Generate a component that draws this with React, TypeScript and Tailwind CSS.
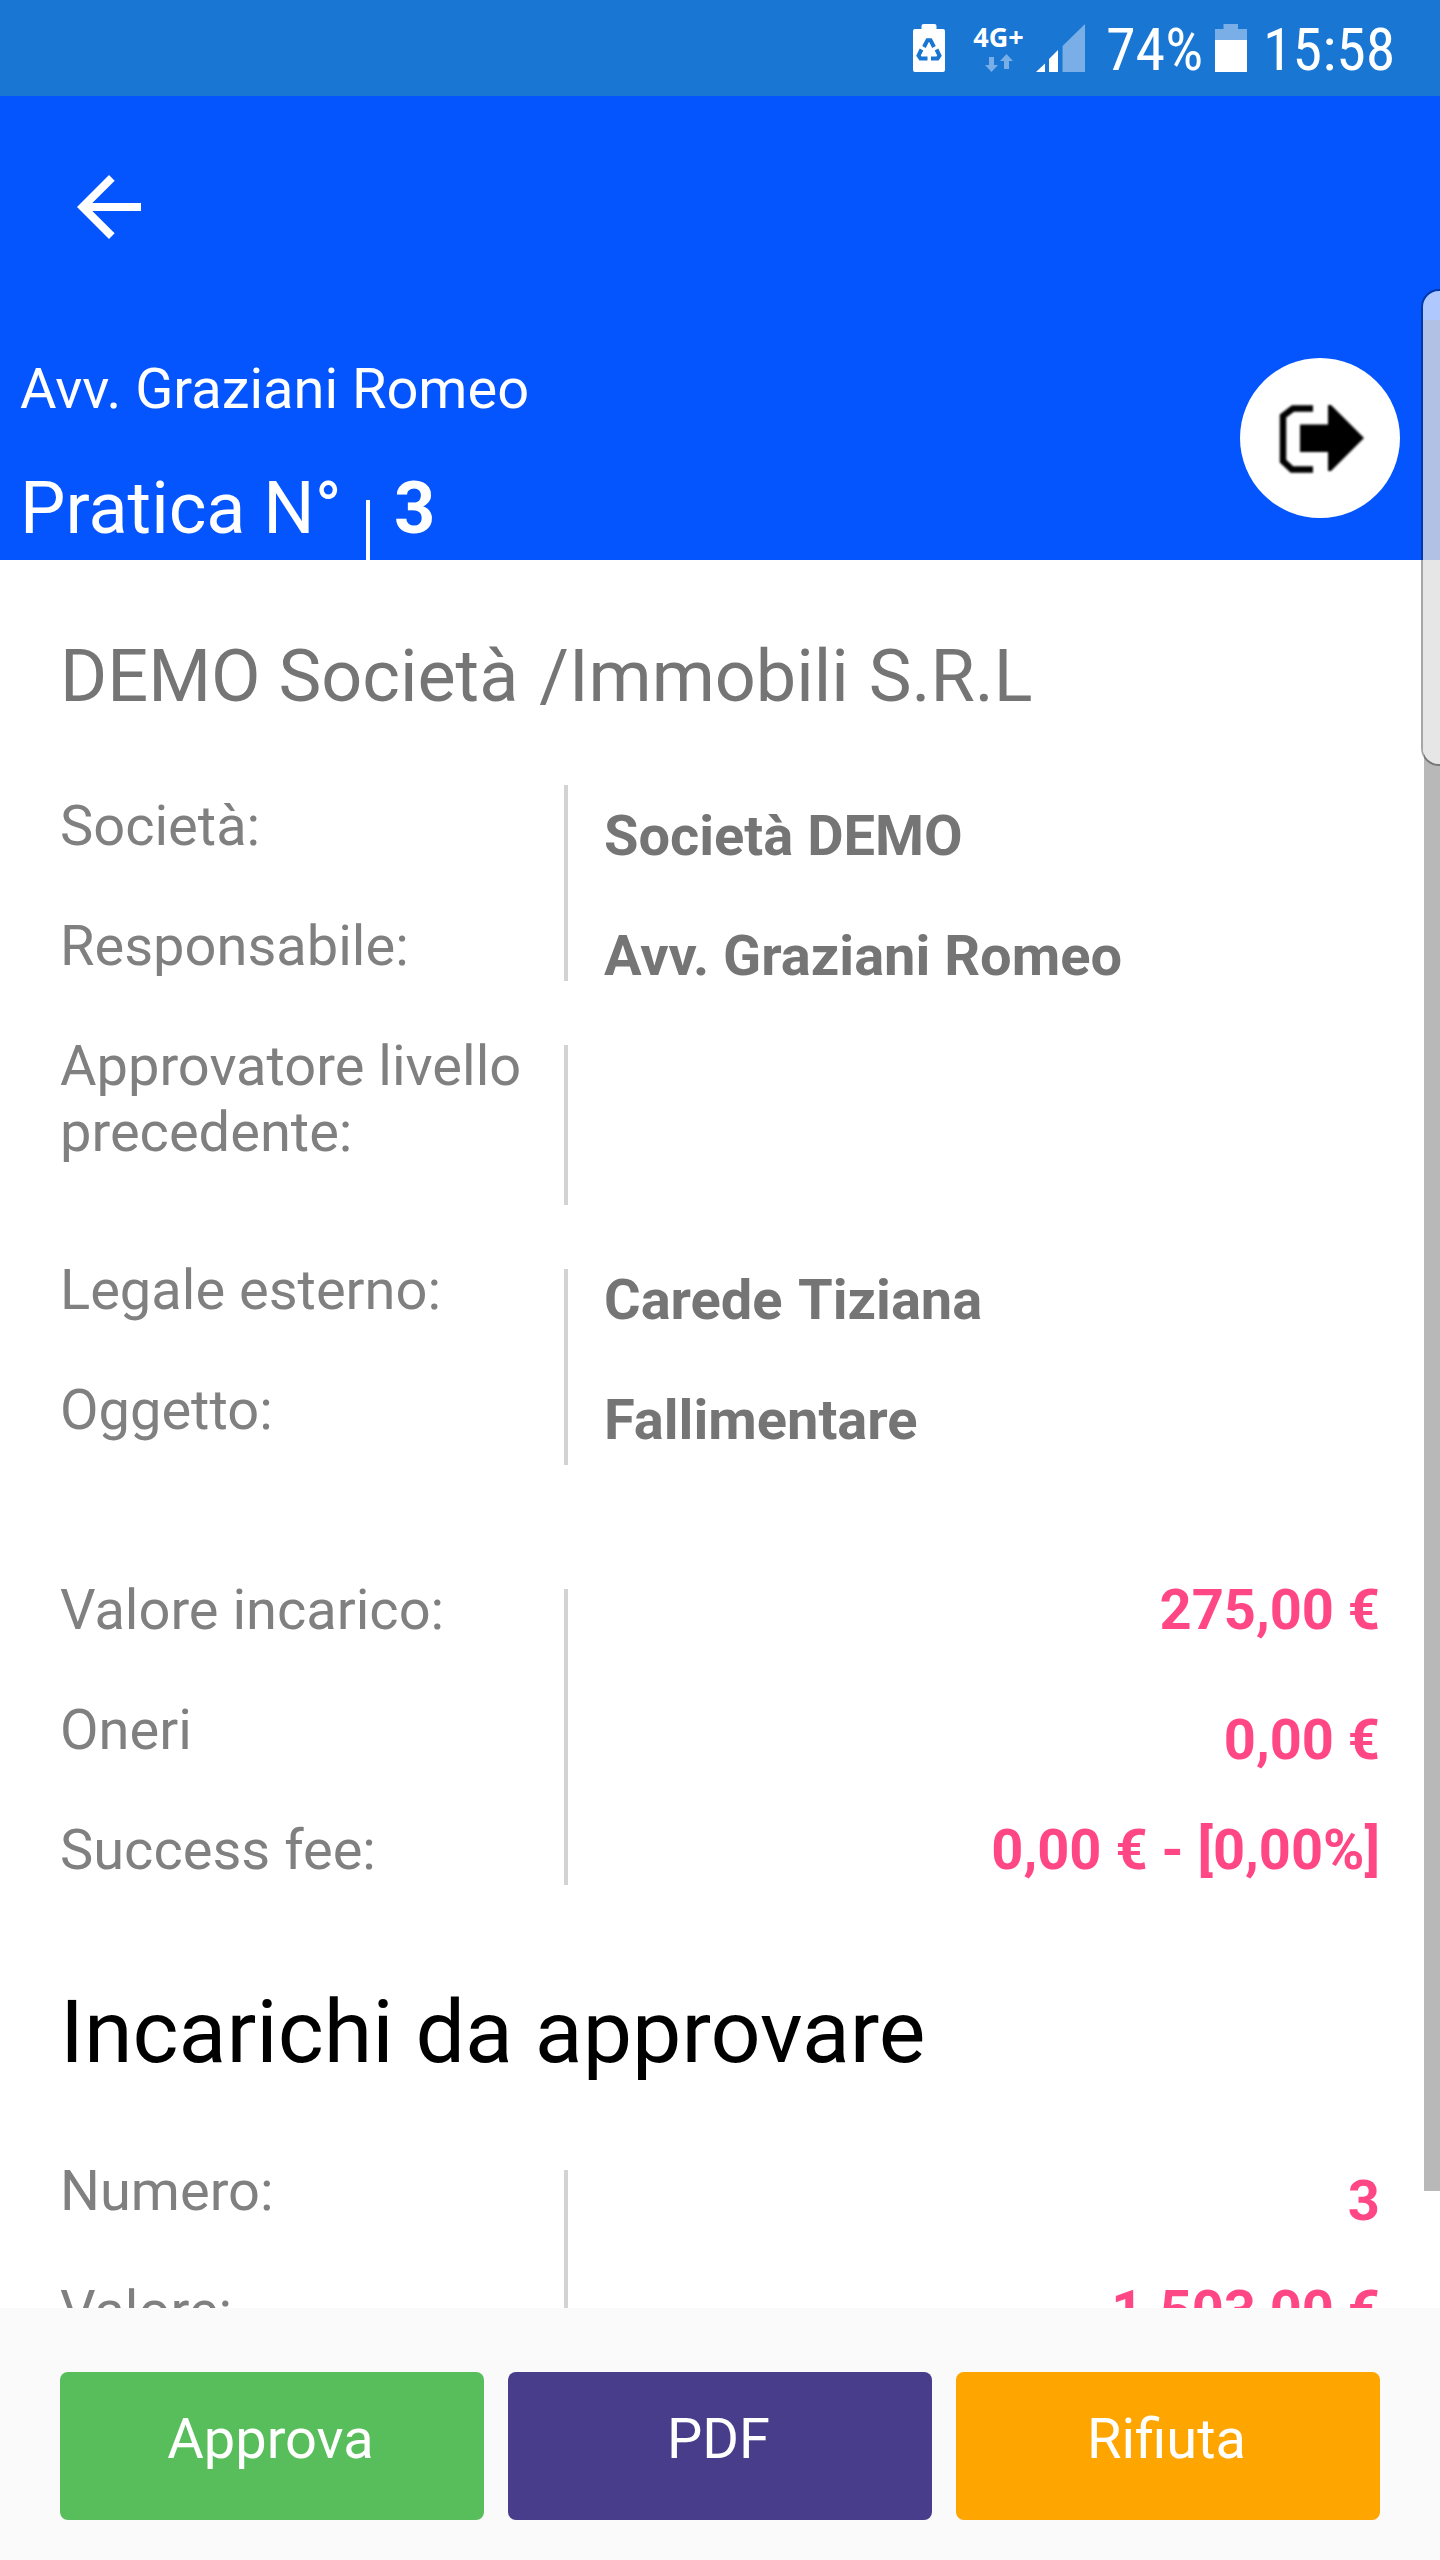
import React from "react";

const label = "text-[56px] leading-[66px] text-[#808080]";
const value = "text-[56px] leading-[66px] font-bold";

function RecycleBattery() {
  return (
    <svg className="h-12 w-8 shrink-0" viewBox="0 0 32 48">
      <path d="M8.5 2Q8.5 0 10.500 0H21.500Q23.500 0 23.500 2V5H30Q32 5 32 7V46Q32 48 30 48H2Q0 48 0 46V7Q0 5 2 5H8.500Z" fill="#fff" />
      <g stroke="#1976d2" strokeWidth="4" fill="none">
        <path d="M11 23L14.500 16.200H17.500L21 23" />
        <path d="M8.500 25.500L5.500 31.500L7.500 34.500H14.500" />
        <path d="M23.500 25.500L26.500 31.500L24.500 34.500H18" />
      </g>
    </svg>
  );
}

function StatusBar() {
  return (
    <div className="flex h-24 shrink-0 items-start bg-[#1976d2] pl-[913px] pt-6 text-white">
      <RecycleBattery />
      <div className="ml-[28px] flex w-[51px] flex-col items-center">
        <span className="mt-[-1px] font-['Open_Sans'] text-[27px] leading-[28px] font-bold">4G+</span>
        <svg className="mt-[3px] h-[18px] w-[28px]" viewBox="0 0 28 18" fill="#79aee6">
          <path d="M4 3H9V11H13L6.500 18L0 11H4Z" />
          <path d="M19 15H24V7H28L21.500 0L15 7H19Z" />
        </svg>
      </div>
      <svg className="ml-[12px] h-12 w-[49px] shrink-0" viewBox="0 0 49 48">
        <path d="M0 48L9 39.500V48Z" fill="#fff" />
        <path d="M13 48V35L22 26V48Z" fill="#fff" />
        <path d="M26.500 48V22L49 0V48Z" fill="#79aee6" />
      </svg>
      <span className="mt-[-2px] ml-[21px] w-[97px] text-[60px] leading-[56px] [font-stretch:75%]">74%</span>
      <svg className="ml-[12px] h-12 w-8 shrink-0" viewBox="0 0 32 48">
        <path d="M8.500 0H23V5H32V16H0V5H8.500Z" fill="#79aee6" />
        <path d="M0 16H32V48H0Z" fill="#fff" />
      </svg>
      <span className="mt-[-2px] ml-[16px] text-[60px] leading-[56px] [font-stretch:75%]">15:58</span>
    </div>
  );
}

function Header() {
  return (
    <header className="flex h-[464px] shrink-0 flex-col bg-[#0455fe] text-white">
      <svg className="mt-[63px] ml-[61px] size-24 shrink-0" viewBox="0 0 24 24" fill="#fff">
        <path d="M20 11H7.830l5.590-5.590L12 4l-8 8 8 8 1.410-1.410L7.830 13H20v-2z" />
      </svg>
      <div className="mt-[101px] flex justify-between pr-10 pl-5">
        <div>
          <div className="text-[56px] leading-[66px]">Avv. Graziani Romeo</div>
          <div className="mt-[45px] flex text-[72px] leading-[84px]">
            <span className="w-[346px]">Pratica N°</span>
            <span className="mt-[33px] h-[60px] w-1 bg-white" />
            <span className="ml-6 font-bold">3</span>
          </div>
        </div>
        <button className="mt-[2px] size-40 rounded-full bg-white">
          <svg className="size-40 blur-[0.8px]" viewBox="0 0 160 160">
            <path d="M73 50.500H53L43 58V103L52 111.500H73" fill="none" stroke="#000" strokeWidth="6.500" />
            <path d="M60 66.500H88V47H91L124 80L91 113H88V94H60Z" fill="#000" />
          </svg>
        </button>
      </div>
    </header>
  );
}

function Divider({ className }: { className: string }) {
  return <div className={`w-1 shrink-0 bg-[#d3d3d3] ${className}`} />;
}

function Labels({ items, className = "" }: { items: string[]; className?: string }) {
  return (
    <div className={`flex w-[504px] shrink-0 flex-col gap-[54px] ${className}`}>
      {items.map((t) => (
        <div key={t} className={label}>{t}</div>
      ))}
    </div>
  );
}

function Content() {
  return (
    <main className="h-[1748px] shrink-0 overflow-hidden bg-white pt-[75px] pr-[60px] pl-[60px]">
      <h1 className="text-[72px] leading-[84px] text-[#757575]">
        DEMO Società <span className="ml-[3px]">/Immobili</span> <span className="ml-[2px]">S.R.L</span>
      </h1>
      <section className="mt-[66px] flex h-[196px]">
        <Labels items={["Società:", "Responsabile:"]} className="pt-2" />
        <Divider className="h-[196px]" />
        <div className="ml-9 flex flex-col gap-[54px] pt-[18px] text-[#757575]">
          <div className={value}>Società DEMO</div>
          <div className={value}>Avv. Graziani Romeo</div>
        </div>
      </section>
      <section className="mt-[52px] flex h-[172px]">
        <Labels items={["Approvatore livello precedente:"]} />
        <Divider className="mt-3" />
      </section>
      <section className="mt-[52px] flex h-[208px]">
        <Labels items={["Legale esterno:", "Oggetto:"]} />
        <Divider className="mt-3" />
        <div className="ml-9 flex flex-col gap-[54px] pt-[10px] text-[#757575]">
          <div className={`[word-spacing:3px] ${value}`}>Carede Tiziana</div>
          <div className={value}>Fallimentare</div>
        </div>
      </section>
      <section className="mt-[112px] flex h-[308px]">
        <Labels items={["Valore incarico:", "Oneri", "Success fee:"]} />
        <Divider className="mt-3" />
        <div className="flex-1 text-right text-[#ff4786]">
          <div className={value}>275,00 €</div>
          <div className={`mt-16 ${value}`}>0,00 €</div>
          <div className={`mt-11 ${value}`}>0,00 € - [0,00%]</div>
        </div>
      </section>
      <h2 className="mt-[95px] text-[88px] leading-[103px] text-black">Incarichi da approvare</h2>
      <section className="mt-[75px] flex h-[308px]">
        <Labels items={["Numero:", "Valore:"]} />
        <Divider className="mt-3" />
        <div className="flex-1 pt-[10px] text-right text-[#ff4786]">
          <div className={value}>3</div>
          <div className={`mt-11 ${value}`}>1.503,00 €</div>
        </div>
      </section>
    </main>
  );
}

function ActionBar() {
  const button = "h-[148px] flex-1 rounded-lg pr-[3px] pb-[14px] text-[56px] leading-[66px] text-white";
  return (
    <footer className="flex h-[252px] shrink-0 gap-6 bg-[#fafafa] px-[60px] pt-16">
      <button className={`${button} bg-[#57be5b]`}>Approva</button>
      <button className={`${button} bg-[#483d8b]`}>PDF</button>
      <button className={`${button} bg-[#ffa500]`}>Rifiuta</button>
    </footer>
  );
}

export default function App() {
  return (
    <div className="relative flex h-[2560px] w-[1440px] flex-col overflow-hidden font-[Roboto,sans-serif]">
      <StatusBar />
      <Header />
      <Content />
      <ActionBar />
      <div className="absolute top-[320px] right-0 h-[1871px] w-4 bg-[#888888]/60" />
      <div className="absolute top-[289px] right-[-21px] h-[477px] w-10 overflow-hidden rounded-[18px] border-2 border-black/35">
        <div className="h-[29px] bg-[#afc8fd]" />
        <div className="h-[240px] bg-[#b1c1e5]" />
        <div className="h-[204px] bg-[#e6e6e6]" />
      </div>
    </div>
  );
}
